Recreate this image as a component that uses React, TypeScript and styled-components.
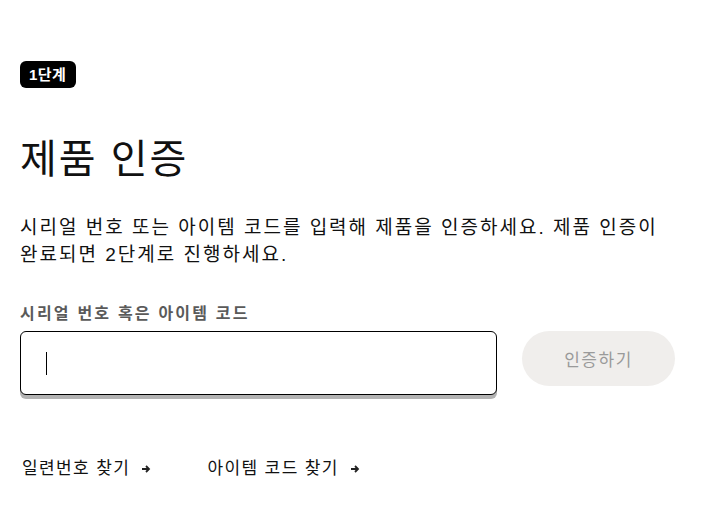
import React from "react";
import styled, { createGlobalStyle } from "styled-components";

const Global = createGlobalStyle`
  html, body { margin: 0; padding: 0; background: #fff; }
  body { font-family: "Liberation Sans", "Noto Sans CJK KR", sans-serif; color: #111; }
`;

const Page = styled.main`
  padding: 61px 20px 0 20px;
  display: flex;
  flex-direction: column;
  width: 661px;
`;

const Badge = styled.span`
  align-self: flex-start;
  background: #000;
  color: #fff;
  font-weight: 700;
  font-size: 15px;
  letter-spacing: 0.4px;
  line-height: 27px;
  height: 27px;
  padding: 0 10px 0 9px;
  border-radius: 6px;
`;

const Title = styled.h1`
  margin: 47px 0 0 0;
  font-size: 40px;
  font-weight: 400;
  line-height: 48px;
  letter-spacing: 2px;
`;

const Desc = styled.p`
  margin: 31px 0 0 0;
  font-size: 19px;
  line-height: 27px;
  letter-spacing: 2px;
  color: #111;
  white-space: nowrap;
`;

const Label = styled.label`
  margin-top: 35px;
  font-size: 16px;
  font-weight: 700;
  letter-spacing: 2.2px;
  color: #5a5a5a;
  line-height: 22px;
`;

const Row = styled.div`
  margin-top: 6px;
  display: flex;
  align-items: flex-start;
  gap: 25px;
`;

const InputBox = styled.div`
  width: 477px;
  height: 64px;
  box-sizing: border-box;
  border: 1px solid #000;
  border-radius: 6px;
  box-shadow: 0 4px 0 #b3b3b3;
  display: flex;
  align-items: center;
  padding-left: 25px;
  background: #fff;
`;

const Caret = styled.span`
  width: 1px;
  height: 23px;
  background: #000;
  flex: none;
`;

const Field = styled.input`
  flex: 1;
  border: none;
  outline: none;
  background: transparent;
  font: inherit;
  font-size: 18px;
  caret-color: transparent;
  padding: 0;
  height: 40px;
`;

const Submit = styled.button`
  width: 153px;
  height: 55px;
  border: none;
  border-radius: 28px;
  background: #f0eeec;
  color: #9a9a9a;
  font-family: inherit;
  font-size: 17px;
  letter-spacing: 1.5px;
  padding: 0;
`;

const Links = styled.nav`
  margin-top: 62px;
  display: flex;
  gap: 56px;
  padding-left: 2px;
`;

const LinkItem = styled.a`
  display: flex;
  align-items: center;
  gap: 11px;
  font-size: 17px;
  letter-spacing: 1.4px;
  color: #111;
  text-decoration: none;
  line-height: 24px;
`;

const Arrow = () => (
  <svg width="10" height="10" viewBox="0 0 10 10" aria-hidden>
    <path d="M1 5h7M5 2l3 3-3 3" stroke="#222" strokeWidth="1.8" fill="none" />
  </svg>
);

export default function App() {
  return (
    <>
      <Global />
      <Page>
        <Badge>1단계</Badge>
        <Title>제품 인증</Title>
        <Desc>
          시리얼 번호 또는 아이템 코드를 입력해 제품을 인증하세요. 제품 인증이
          <br />
          완료되면 2단계로 진행하세요.
        </Desc>
        <Label htmlFor="code">시리얼 번호 혹은 아이템 코드</Label>
        <Row>
          <InputBox>
            <Caret />
            <Field id="code" />
          </InputBox>
          <Submit>인증하기</Submit>
        </Row>
        <Links>
          <LinkItem href="#">
            일련번호 찾기 <Arrow />
          </LinkItem>
          <LinkItem href="#">
            아이템 코드 찾기 <Arrow />
          </LinkItem>
        </Links>
      </Page>
    </>
  );
}
